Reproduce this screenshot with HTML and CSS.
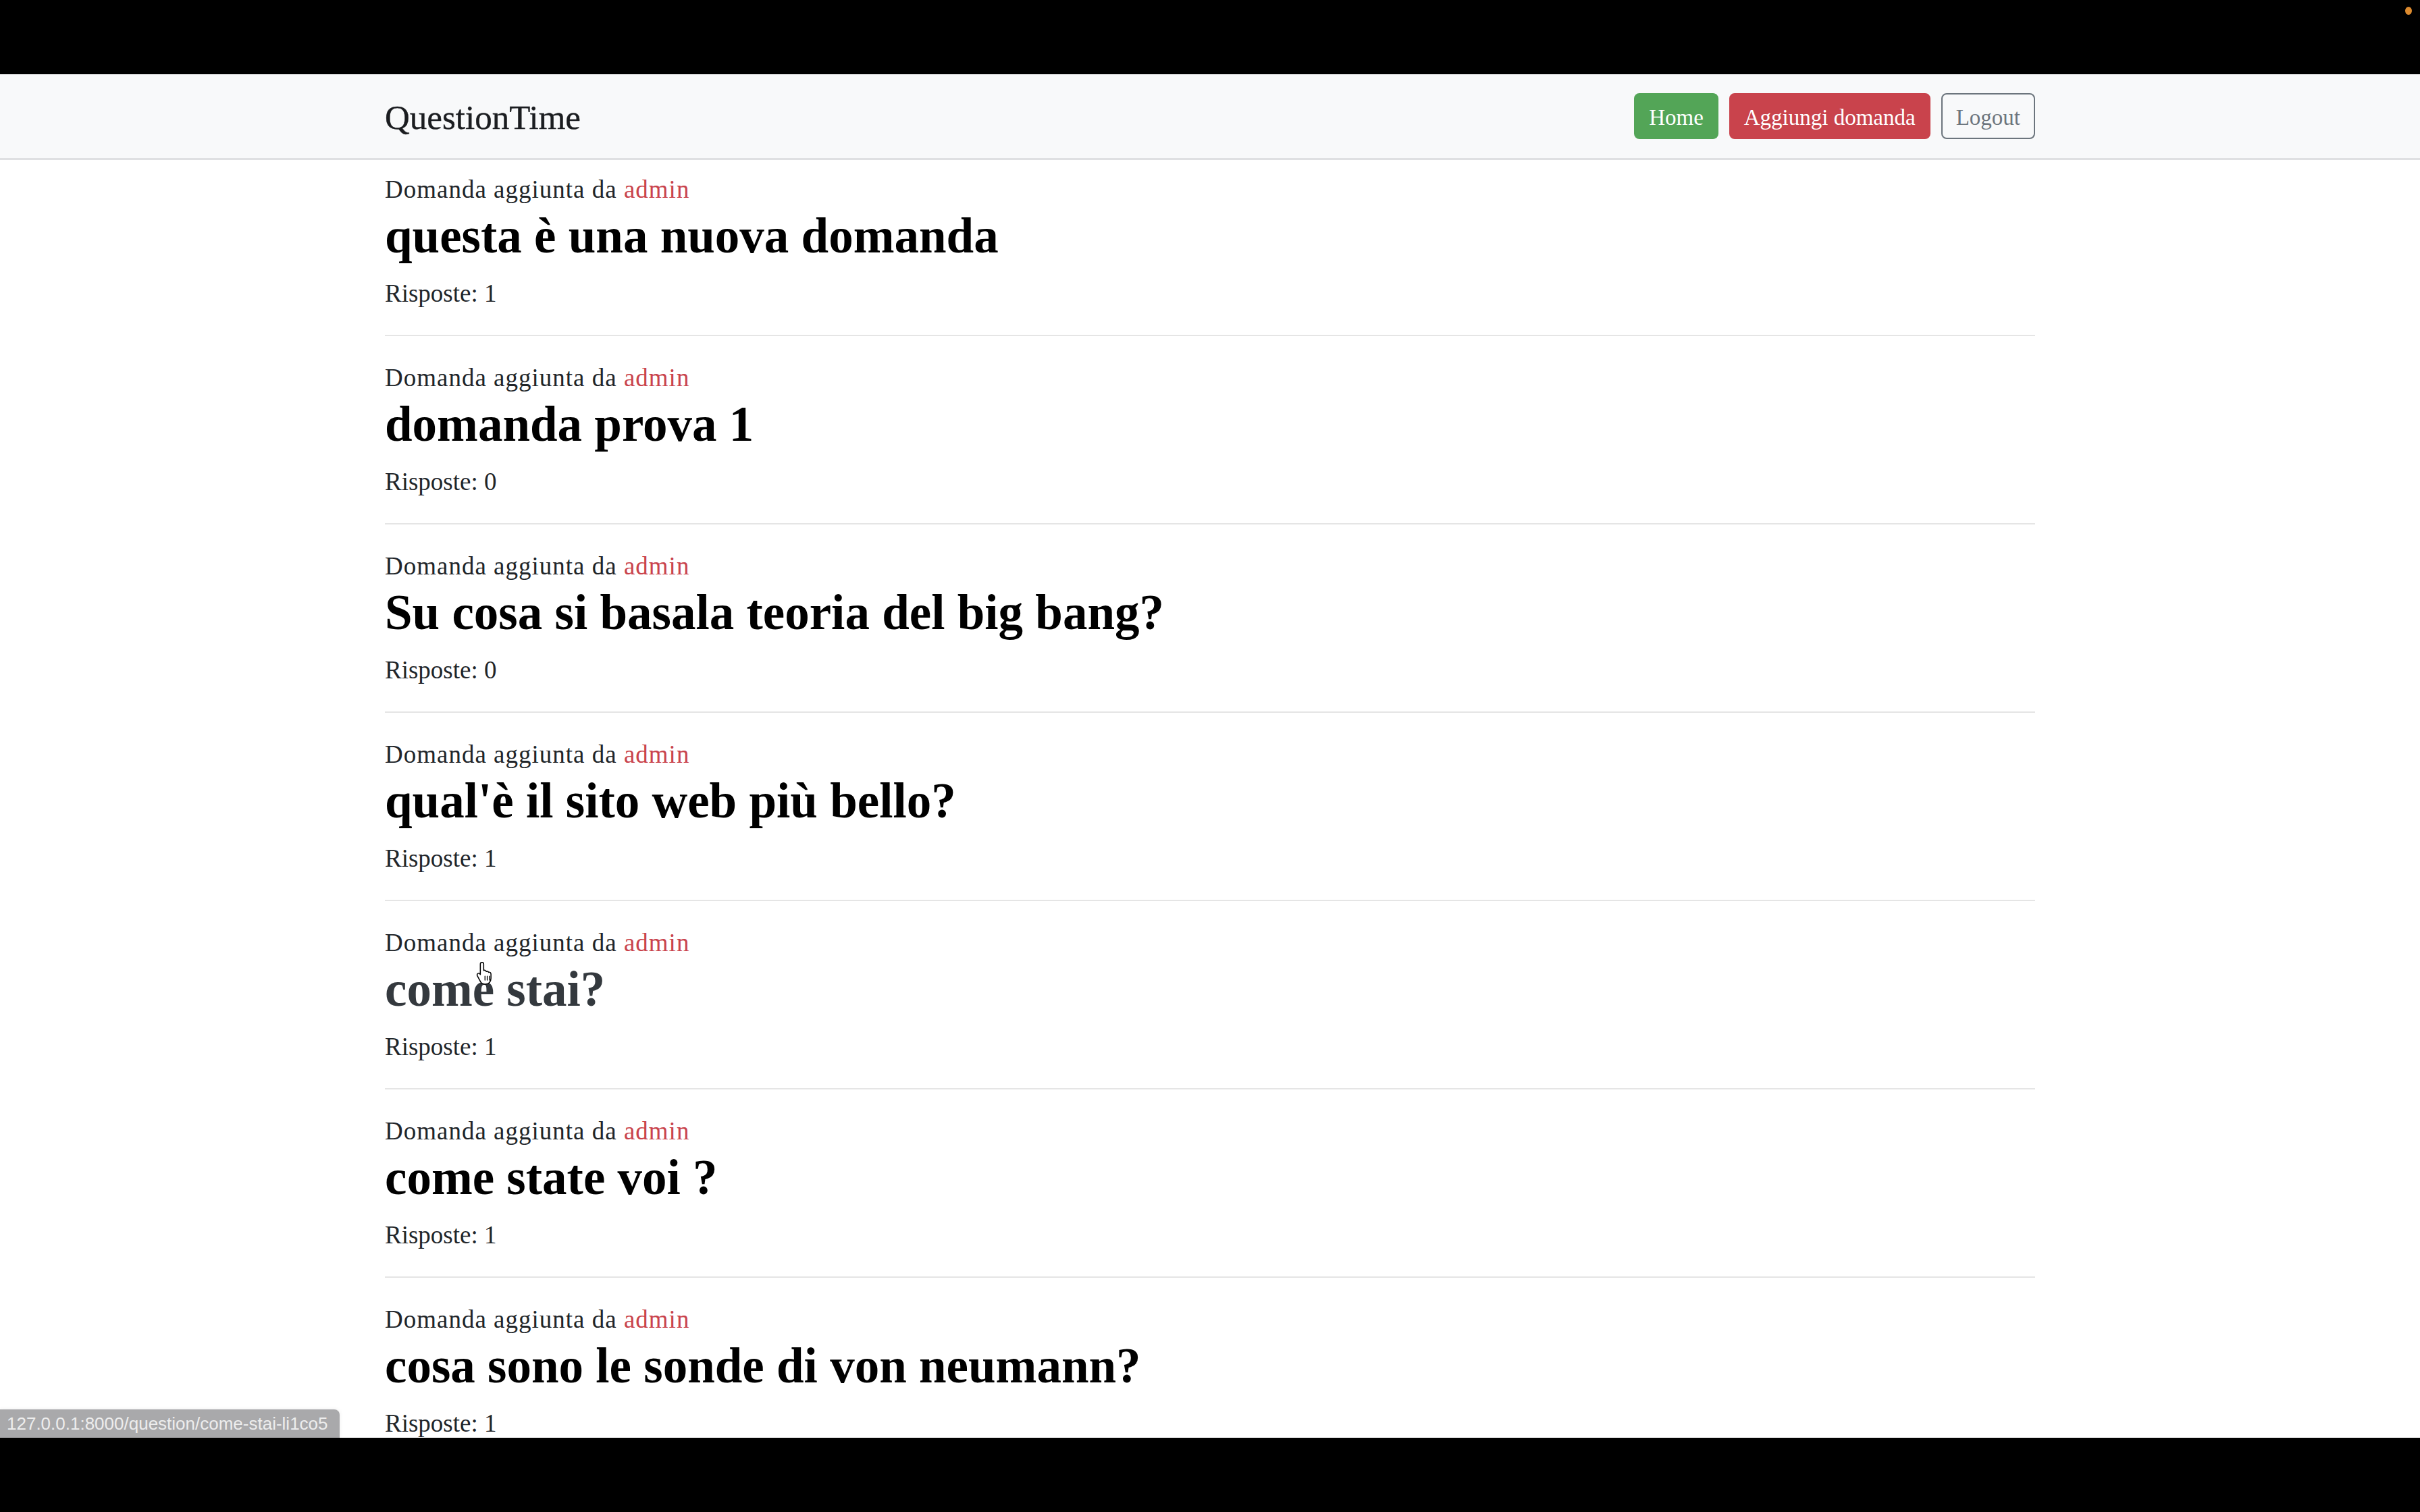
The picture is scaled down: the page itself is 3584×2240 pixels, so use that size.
FILE: index.html
```html
<!DOCTYPE html>
<html lang="it">
<head>
<meta charset="utf-8">
<title>QuestionTime</title>
<link rel="stylesheet" href="styles.css">
</head>
<body>
<div class="letterbox letterbox-top"><span class="rec-dot"></span></div>
<div class="viewport">
  <nav class="navbar">
    <div class="container nav-inner">
      <a class="brand" href="#">QuestionTime</a>
      <div class="actions">
        <a class="btn btn-success" href="#">Home</a>
        <a class="btn btn-danger" href="#">Aggiungi domanda</a>
        <a class="btn btn-outline" href="#">Logout</a>
      </div>
    </div>
  </nav>
  <main class="container list">
    <article class="question">
      <p class="meta">Domanda aggiunta da <a class="author" href="#">admin</a></p>
      <h1 class="title"><a href="#">questa è una nuova domanda</a></h1>
      <p class="answers">Risposte: 1</p>
    </article>
    <hr class="divider">
    <article class="question">
      <p class="meta">Domanda aggiunta da <a class="author" href="#">admin</a></p>
      <h1 class="title"><a href="#">domanda prova 1</a></h1>
      <p class="answers">Risposte: 0</p>
    </article>
    <hr class="divider">
    <article class="question">
      <p class="meta">Domanda aggiunta da <a class="author" href="#">admin</a></p>
      <h1 class="title"><a href="#">Su cosa si basala teoria del big bang?</a></h1>
      <p class="answers">Risposte: 0</p>
    </article>
    <hr class="divider">
    <article class="question">
      <p class="meta">Domanda aggiunta da <a class="author" href="#">admin</a></p>
      <h1 class="title"><a href="#">qual'è il sito web più bello?</a></h1>
      <p class="answers">Risposte: 1</p>
    </article>
    <hr class="divider">
    <article class="question">
      <p class="meta">Domanda aggiunta da <a class="author" href="#">admin</a></p>
      <h1 class="title"><a class="is-hover" href="#">come stai?</a></h1>
      <p class="answers">Risposte: 1</p>
    </article>
    <hr class="divider">
    <article class="question">
      <p class="meta">Domanda aggiunta da <a class="author" href="#">admin</a></p>
      <h1 class="title"><a href="#">come state voi ?</a></h1>
      <p class="answers">Risposte: 1</p>
    </article>
    <hr class="divider">
    <article class="question">
      <p class="meta">Domanda aggiunta da <a class="author" href="#">admin</a></p>
      <h1 class="title"><a href="#">cosa sono le sonde di von neumann?</a></h1>
      <p class="answers">Risposte: 1</p>
    </article>
    <hr class="divider">
  </main>
  <div class="status-url">127.0.0.1:8000/question/come-stai-li1co5</div>
  <svg class="cursor" viewBox="0 0 20 26" width="28" height="36" aria-hidden="true">
    <path d="M7 1.2c1 0 1.8.8 1.8 1.8v6.9l.3-.1c.9-.4 2 .1 2.3 1l.1.3c.8-.5 1.9-.3 2.4.6l.1.2c.8-.4 1.9-.1 2.3.8.2.4.3.9.3 1.4v4.2c0 3.4-2.3 6.3-5.6 6.3H10c-2 0-3.6-1-4.6-2.6L2 15.6c-.5-.8-.3-1.9.5-2.4.8-.5 1.8-.3 2.3.5l.4.6V3c0-1 .8-1.8 1.8-1.8z" fill="#fff" stroke="#000" stroke-width="1.1" stroke-linejoin="round"/>
    <path d="M10.2 16v4.3M12.6 16v4.3M15 16v4.3" stroke="#000" stroke-width="1" stroke-linecap="round"/>
  </svg>
</div>
<div class="letterbox letterbox-bottom"></div>
</body>
</html>
```
FILE: styles.css
```css
html, body {
  margin: 0;
  padding: 0;
}

body {
  background: #000;
  font-family: "Liberation Serif", "Times New Roman", serif;
  color: #212529;
}

.letterbox {
  height: 110px;
  background: #000;
  position: relative;
}

.rec-dot {
  position: absolute;
  left: 3562px;
  top: 10px;
  width: 10px;
  height: 12px;
  border-radius: 50%;
  background: #dc8a2e;
}

.viewport {
  position: relative;
  height: 2020px;
  overflow: hidden;
  background: #fff;
}

.container {
  width: 2444px;
  margin: 0 auto;
}

.navbar {
  height: 124px;
  background: #f8f9fa;
  border-bottom: 3px solid #dfe0e2;
}

.nav-inner {
  height: 100%;
  display: flex;
  align-items: center;
  justify-content: space-between;
}

.brand {
  font-size: 51px;
  line-height: 60px;
  padding-top: 4px;
  color: #1b1d20;
  text-decoration: none;
  -webkit-text-stroke: 0.4px #1b1d20;
}

.actions {
  display: flex;
  gap: 16px;
}

.btn {
  display: inline-block;
  font-size: 33px;
  line-height: 48px;
  padding: 10px 20px 6px;
  border: 2px solid transparent;
  border-radius: 8px;
  text-decoration: none;
  white-space: nowrap;
}

.btn-success {
  background: #53a557;
  border-color: #53a557;
  color: #fff;
}

.btn-danger {
  background: #c9434c;
  border-color: #c9434c;
  color: #fff;
}

.btn-outline {
  background: transparent;
  border-color: #6c757d;
  color: #6c757d;
}

.list {
  padding-top: 20px;
}

.meta {
  margin: 0;
  font-size: 37px;
  line-height: 48px;
  letter-spacing: 1px;
  color: #212529;
}

.author {
  color: #c9434c;
  text-decoration: none;
}

.title {
  margin: 0;
  font-size: 73px;
  line-height: 90px;
  font-weight: 700;
}

.title a {
  color: #000;
  text-decoration: none;
}

.title a.is-hover {
  color: #34393e;
}

.answers {
  margin: 16px 0 0;
  font-size: 37px;
  line-height: 48px;
  color: #212529;
}

.divider {
  margin: 37px 0 38px;
  border: 0;
  height: 2px;
  background: #e5e5e5;
}

.status-url {
  position: absolute;
  left: 0;
  bottom: 0;
  height: 42px;
  padding: 0 17px 0 10px;
  background: #a9a9ab;
  color: #ededed;
  font-family: "Liberation Sans", Arial, sans-serif;
  font-size: 26px;
  line-height: 42px;
  border-top-right-radius: 8px;
  box-shadow: 0 0 6px rgba(0, 0, 0, 0.08);
}

.cursor {
  position: absolute;
  left: 704px;
  top: 1314px;
}
```
